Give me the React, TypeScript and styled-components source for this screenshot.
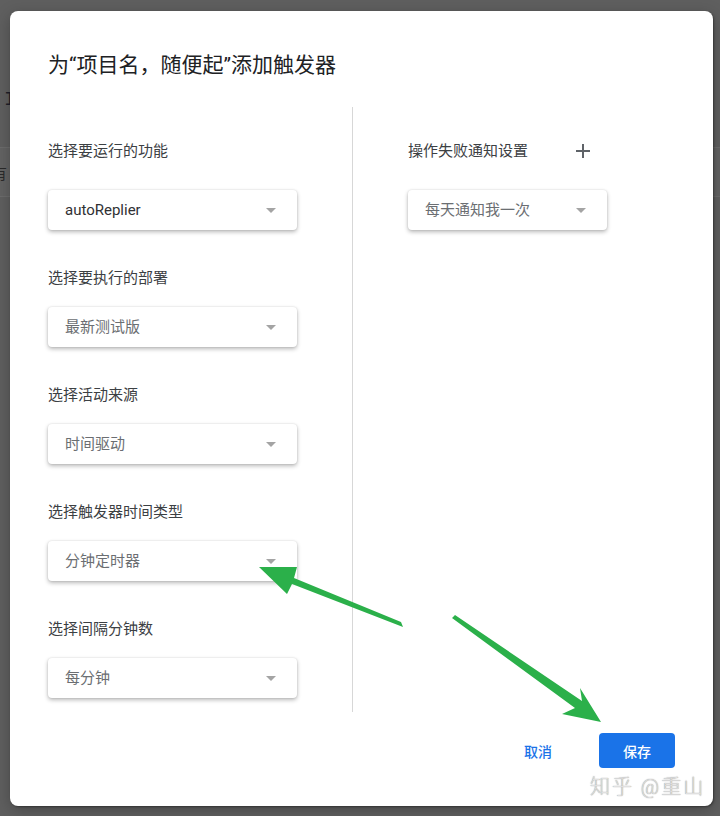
import React from "react";
import styled, { createGlobalStyle } from "styled-components";

const Global = createGlobalStyle`
  html, body { margin: 0; padding: 0; }
  body {
    width: 720px;
    height: 816px;
    overflow: hidden;
    background: #5e5e5e;
    font-family: Roboto, "Noto Sans CJK SC", "Noto Sans", sans-serif;
  }
`;

const Page = styled.div`
  position: relative;
  width: 720px;
  height: 816px;
  background: #5f5f5f;
  overflow: hidden;
`;

const BackPage = styled.div`
  display: flex;
  flex-direction: column;
  padding-top: 88px;
`;

const BackTitle = styled.div`
  padding-left: 4px;
  font-family: "Liberation Mono", monospace;
  font-size: 20px;
  line-height: 24px;
  color: #1f1f2a;
  height: 59px;
`;

const BackBand = styled.div`
  height: 48px;
  border-top: 1px solid #6c6c6c;
  border-bottom: 1px solid #6c6c6c;
  background: #636363;
  display: flex;
  align-items: center;
  margin-left: -8px;
  font-size: 15px;
  color: #2a2a2a;
`;

const Dialog = styled.div`
  position: absolute;
  left: 10px;
  top: 11px;
  width: 703px;
  height: 795px;
  box-sizing: border-box;
  background: #ffffff;
  border-radius: 8px;
  box-shadow: 1px 1px 2px rgba(0, 0, 0, 0.35), 0 4px 16px rgba(0, 0, 0, 0.25);
  display: flex;
  flex-direction: column;
  padding: 0 38px;
`;

const Title = styled.h2`
  margin: 42px 0 0;
  font-size: 21px;
  line-height: 24px;
  font-weight: 400;
  color: #202124;
  height: 54px;
`;

const Body = styled.div`
  display: flex;
  align-items: stretch;
  height: 605px;
`;

const LeftColumn = styled.div`
  flex: 0 0 304px;
  padding-top: 24px;
  display: flex;
  flex-direction: column;
`;

const RightColumn = styled.div`
  flex: 1 1 auto;
  padding-left: 55px;
  padding-top: 24px;
  display: flex;
  flex-direction: column;
`;

const Divider = styled.div`
  flex: 0 0 1px;
  background: #d7d7d7;
`;

const Field = styled.div`
  display: flex;
  flex-direction: column;
  gap: 19px;
  margin-bottom: 38px;
`;

const LabelRow = styled.div<{ $tall?: boolean }>`
  display: flex;
  align-items: center;
  height: ${(p) => (p.$tall ? 40 : 20)}px;
`;

const Label = styled.span`
  font-size: 15px;
  line-height: 20px;
  color: #3c4043;
`;

const AddButton = styled.button`
  margin-left: 45px;
  width: 20px;
  height: 20px;
  padding: 0;
  border: none;
  background: transparent;
  display: flex;
  align-items: center;
  justify-content: center;
  color: #5f6368;
`;

const SelectBox = styled.div<{ $width: number }>`
  width: ${(p) => p.$width}px;
  height: 40px;
  box-sizing: border-box;
  border-radius: 4px;
  background: #fff;
  box-shadow: 0 2px 4px rgba(0, 0, 0, 0.28), 0 0 2px rgba(0, 0, 0, 0.12);
  display: flex;
  align-items: center;
  justify-content: space-between;
  padding: 0 21px 0 17px;
`;

const SelectText = styled.span<{ $dark?: boolean }>`
  font-size: 15px;
  line-height: 20px;
  color: ${(p) => (p.$dark ? "#303134" : "#6b6e72")};
`;

const Caret = styled.span`
  width: 0;
  height: 0;
  border-left: 5px solid transparent;
  border-right: 5px solid transparent;
  border-top: 5px solid #a4a4a4;
`;

const Footer = styled.div`
  display: flex;
  justify-content: flex-end;
  align-items: center;
  padding-top: 21px;
  gap: 31px;
`;

const TextButton = styled.button`
  height: 35px;
  padding: 0 16px;
  border: none;
  background: transparent;
  color: #1a73e8;
  font-family: Roboto, "Noto Sans CJK SC", sans-serif;
  font-size: 14px;
  font-weight: 500;
`;

const PrimaryButton = styled.button`
  width: 76px;
  height: 35px;
  border: none;
  border-radius: 4px;
  background: #1a73e8;
  color: #ffffff;
  font-family: Roboto, "Noto Sans CJK SC", sans-serif;
  font-size: 14px;
  font-weight: 500;
`;

const Watermark = styled.div`
  position: absolute;
  left: 590px;
  top: 774px;
  font-size: 20px;
  line-height: 26px;
  font-weight: 300;
  color: #e0e0e0;
  text-shadow: 0 0 1px rgba(80, 80, 80, 0.8);
  white-space: nowrap;
  letter-spacing: 2px;
`;

const Annotations = styled.svg`
  position: absolute;
  left: 0;
  top: 0;
  pointer-events: none;
`;

type Sel = { label: string; value: string; dark?: boolean };

const leftFields: Sel[] = [
  { label: "选择要运行的功能", value: "autoReplier", dark: true },
  { label: "选择要执行的部署", value: "最新测试版" },
  { label: "选择活动来源", value: "时间驱动" },
  { label: "选择触发器时间类型", value: "分钟定时器" },
  { label: "选择间隔分钟数", value: "每分钟" },
];

const Select = ({ value, dark, width }: { value: string; dark?: boolean; width: number }) => (
  <SelectBox $width={width}>
    <SelectText $dark={dark}>{value}</SelectText>
    <Caret />
  </SelectBox>
);

export default function App() {
  return (
    <Page>
      <Global />
      <BackPage>
        <BackTitle>I</BackTitle>
        <BackBand>有</BackBand>
      </BackPage>
      <Dialog>
        <Title>为“项目名，随便起”添加触发器</Title>
        <Body>
          <LeftColumn>
            {leftFields.map((f, i) => (
              <Field key={f.label}>
                <LabelRow $tall={i === 0}>
                  <Label>{f.label}</Label>
                </LabelRow>
                <Select value={f.value} dark={f.dark} width={249} />
              </Field>
            ))}
          </LeftColumn>
          <Divider />
          <RightColumn>
            <Field>
              <LabelRow $tall>
                <Label>操作失败通知设置</Label>
                <AddButton aria-label="add">
                  <svg width="16" height="16" viewBox="0 0 16 16">
                    <path d="M8 1v14M1 8h14" stroke="#5f6368" strokeWidth="2" />
                  </svg>
                </AddButton>
              </LabelRow>
              <Select value="每天通知我一次" width={199} />
            </Field>
          </RightColumn>
        </Body>
        <Footer>
          <TextButton>取消</TextButton>
          <PrimaryButton>保存</PrimaryButton>
        </Footer>
      </Dialog>
      <Watermark>知乎 @重山</Watermark>
      <Annotations width="720" height="816" viewBox="0 0 720 816">
        <polygon points="401,622 403,627 292,584 287,594 259,567 297,567 294,578" fill="#2bb04a" />
        <polygon points="452,618 455,615 582,701 580,688 601,722 562,714 575,708" fill="#2bb04a" />
      </Annotations>
    </Page>
  );
}
